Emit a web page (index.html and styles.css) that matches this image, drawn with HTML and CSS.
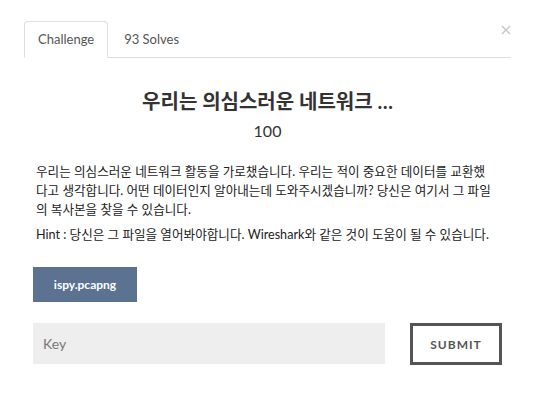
FILE: index.html
```html
<!DOCTYPE html>
<html lang="ko">
<head>
<meta charset="utf-8">
<title>Challenge</title>
<link rel="stylesheet" href="styles.css">
</head>
<body>
<div class="modal">
  <button class="close" aria-label="Close">
    <svg width="10" height="10" viewBox="0 0 10 10"><path d="M1 1 L9 9 M9 1 L1 9" stroke="#c4c4c4" stroke-width="1.4" fill="none"/></svg>
  </button>
  <ul class="tabs">
    <li class="tab active">Challenge</li>
    <li class="tab">93 Solves</li>
  </ul>
  <div class="content">
    <h2 class="title">우리는 의심스러운 네트워크 …</h2>
    <div class="points">100</div>
    <div class="desc">
      <p>우리는 의심스러운 네트워크 활동을 가로챘습니다. 우리는 적이 중요한 데이터를 교환했다고 생각합니다. 어떤 데이터인지 알아내는데 도와주시겠습니까? 당신은 여기서 그 파일의 복사본을 찾을 수 있습니다.</p>
      <p>Hint : 당신은 그 파일을 열어봐야합니다. Wireshark와 같은 것이 도움이 될 수 있습니다.</p>
    </div>
    <div class="files">
      <a class="file-btn">ispy.pcapng</a>
    </div>
    <form class="answer">
      <input class="key" type="text" placeholder="Key">
      <button class="submit" type="button">SUBMIT</button>
    </form>
  </div>
</div>
</body>
</html>
```
FILE: styles.css
```css
html, body {
  margin: 0;
  padding: 0;
  background: #fff;
}
body {
  font-family: Lato, "Noto Sans CJK KR", sans-serif;
  color: #333;
}
.modal {
  position: relative;
  padding: 21px 23px 0 24px;
}
.close {
  position: absolute;
  top: 25px;
  right: 23px;
  width: 10px;
  height: 10px;
  padding: 0;
  border: 0;
  background: none;
  display: flex;
}
.tabs {
  list-style: none;
  margin: 0;
  padding: 0;
  display: flex;
  border-bottom: 1px solid #dedede;
}
.tab {
  height: 35px;
  line-height: 35px;
  padding: 0 13px;
  margin-right: 2px;
  margin-bottom: -1px;
  border: 1px solid transparent;
  border-radius: 4px 4px 0 0;
  font-size: 13px;
  color: #555;
}
.tab.active {
  border-color: #dedede #dedede #fff;
  background: #fff;
}
.content {
  padding: 0 9px;
}
.title {
  margin: 29px 0 0;
  font-size: 20px;
  line-height: 28px;
  font-weight: 700;
  text-align: center;
  color: #333;
}
.points {
  margin-top: 6px;
  font-size: 16px;
  line-height: 20px;
  text-align: center;
  color: #333;
}
.desc {
  margin-top: 21px;
  padding: 0 11px 0 3px;
  font-size: 12.6px;
  line-height: 19px;
  color: #222;
}
.desc p {
  margin: 0 0 6px;
}
.files {
  margin-top: 23px;
  display: flex;
}
.file-btn {
  display: flex;
  align-items: center;
  justify-content: center;
  width: 104px;
  height: 35px;
  background: #5b7290;
  color: #fff;
  font-size: 12px;
  font-weight: 700;
}
.answer {
  margin: 21px 0 0;
  display: flex;
  justify-content: space-between;
  align-items: flex-start;
}
.key {
  width: 352px;
  height: 41px;
  box-sizing: border-box;
  border: 0;
  padding: 0 10px;
  background: #eee;
  font-family: Lato, sans-serif;
  font-size: 14px;
  color: #555;
}
.key::placeholder {
  color: #777;
}
.submit {
  width: 92px;
  height: 42px;
  box-sizing: border-box;
  border: 3px solid #555;
  background: #fff;
  font-family: Lato, sans-serif;
  font-size: 12px;
  font-weight: 700;
  letter-spacing: 1px;
  color: #555;
  padding: 0;
}
```
